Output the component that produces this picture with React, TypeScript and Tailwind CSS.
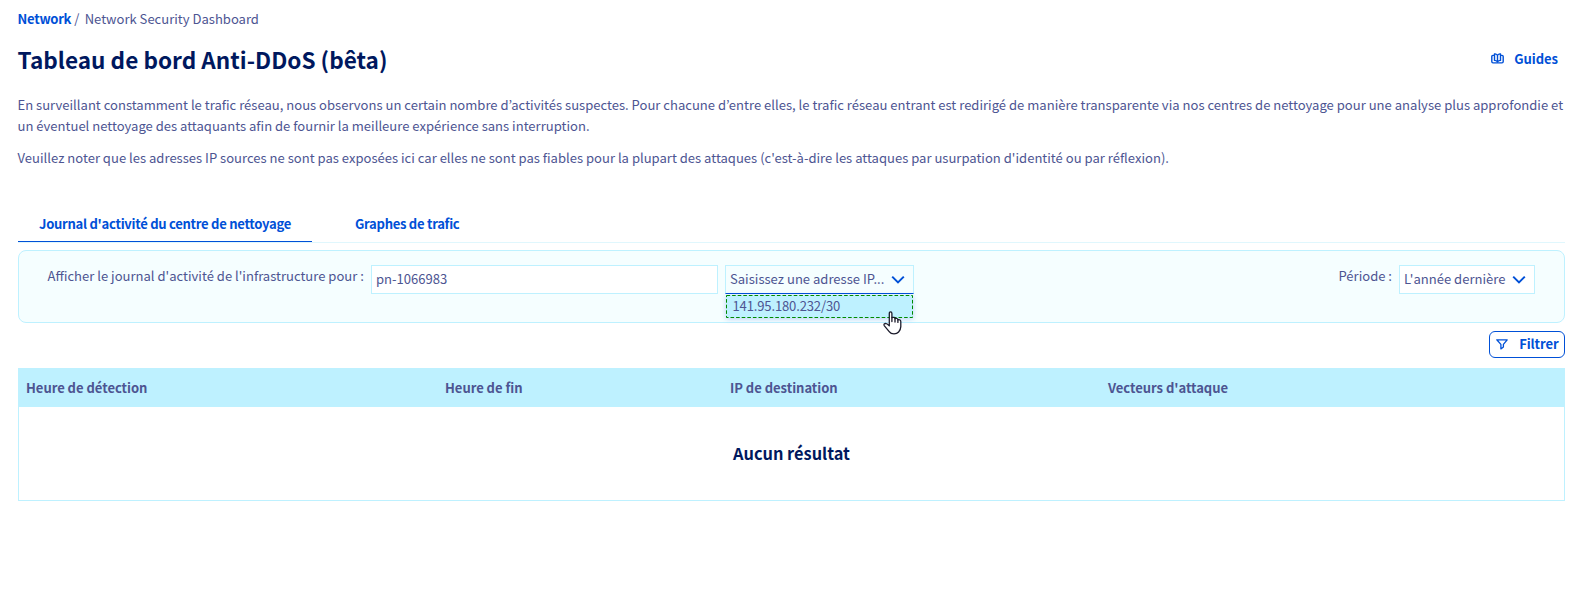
const columns = [
  { label: "Heure de détection", width: "w-[419px]" },
  { label: "Heure de fin", width: "w-[285px]" },
  { label: "IP de destination", width: "w-[378px]" },
  { label: "Vecteurs d'attaque", width: "flex-1" },
];

function Chevron() {
  return (
    <svg width="14" height="10" viewBox="0 0 14 10" fill="none" stroke="#0050d7" strokeWidth="2">
      <path d="M1.2 1.6 L7 7.4 L12.8 1.6" />
    </svg>
  );
}

function BookIcon() {
  return (
    <svg width="13" height="11" viewBox="0 0 13 11" fill="none" stroke="#0050d7" strokeWidth="1.4" strokeLinejoin="round">
      <path d="M3.4 2.4 H2 Q0.8 2.4 0.8 3.6 V8.6 Q0.8 9.9 2 9.9 H11 Q12.2 9.9 12.2 8.6 V3.6 Q12.2 2.4 11 2.4 H9.6" />
      <path d="M6.5 2.2 V8.6 M6.5 2.2 Q5 0.5 3.5 1 V7.4 Q5.4 7.4 6.5 8.9 Q7.6 7.4 9.5 7.4 V1 Q8 0.5 6.5 2.2" />
    </svg>
  );
}

function FilterIcon() {
  return (
    <svg width="12" height="11" viewBox="0 0 12 11" fill="none" stroke="#0050d7" strokeWidth="1.3" strokeLinejoin="round">
      <path d="M0.8 0.8 H11.2 L7.4 5.4 V8 L4.9 9.9 V5.4 Z" />
    </svg>
  );
}

function FocusRing() {
  return (
    <svg className="absolute left-0 top-0" width="187" height="23" fill="none" stroke="#008a00" strokeDasharray="3.6 2">
      <rect x="0.5" y="0.5" width="186" height="22" />
    </svg>
  );
}

function HandCursor() {
  return (
    <svg
      className="absolute left-[157px] top-4"
      width="20"
      height="24"
      viewBox="0 0 20 24"
      fill="#ffffff"
      stroke="#1b1b2b"
      strokeWidth="1.3"
      strokeLinejoin="round"
      strokeLinecap="round"
    >
      <path d="M6.3 14.8 V2.4 Q6.3 0.8 7.6 0.8 Q8.9 0.8 8.9 2.4 V6.6 Q11.8 5.8 12 7.6 Q14.6 6.8 14.9 8.8 Q17.8 8.2 17.8 10.8 V15.6 Q17.6 19 15.6 21 Q14 22.9 11 22.9 Q7.8 22.9 6.2 20.6 L1.2 14.6 Q0.4 12.8 2.4 12.4 Q4 12.4 6.3 14.8 Z" />
      <path d="M8.9 6.6 V10.6 M12 7.8 V11 M14.9 8.8 V11.4" fill="none" />
    </svg>
  );
}

export default function App() {
  return (
    <div className="h-[602px] overflow-hidden bg-white pl-[18px] pr-[26px] pt-2 font-['Noto_Sans_CJK_KR','Noto_Sans',sans-serif] text-[13.06px] leading-[21px] text-[#4d5592]">
      <nav className="-ml-[0.5px] flex whitespace-pre">
        <a className="font-bold tracking-[-0.27px] text-[#0050d7]">Network</a>
        <span> / </span>
        <span className="ml-[2.5px]">Network Security Dashboard</span>
      </nav>

      <header className="mt-4 flex h-7 items-center justify-between">
        <h1 className="-ml-[0.5px] text-[22.56px] font-bold leading-7 tracking-[0.02px] text-[#00185e]">
          Tableau de bord Anti-DDoS (bêta)
        </h1>
        <a className="flex items-center gap-2.5 pb-0.5 pr-[7px] font-bold tracking-[-0.05px] text-[#0050d7]">
          <BookIcon />
          Guides
        </a>
      </header>

      <p className="-ml-[0.5px] mt-[21px] tracking-[0.003px]">
        <span className="block whitespace-nowrap">
          En surveillant constamment le trafic réseau, nous observons un certain nombre d’activités suspectes. Pour
          chacune d’entre elles, le trafic réseau entrant est redirigé de manière transparente via nos centres de
          nettoyage pour une analyse plus approfondie et
        </span>
        <span className="block">
          un éventuel nettoyage des attaquants afin de fournir la meilleure expérience sans interruption.
        </span>
      </p>
      <p className="-ml-[0.5px] mt-[11px] tracking-[0.003px]">
        Veuillez noter que les adresses IP sources ne sont pas exposées ici car elles ne sont pas fiables pour la
        plupart des attaques (c'est-à-dire les attaques par usurpation d'identité ou par réflexion).
      </p>

      <div className="mt-11 flex h-[31px] border-b border-[#e0f7fd] font-bold leading-[23px] tracking-[-0.28px] text-[#0050d7]">
        <a className="h-[30px] w-[294px] border-b border-[#0050d7] pl-[21px]">Journal d'activité du centre de nettoyage</a>
        <a className="pl-[43px]">Graphes de trafic</a>
      </div>

      <section className="mt-[7px] flex h-[73px] rounded-lg border border-[#bef1ff] bg-[#f5feff] pl-7 pr-[29px] pt-[14px]">
        <label className="w-[324px] whitespace-nowrap pl-[0.5px]">
          Afficher le journal d'activité de l'infrastructure pour :
        </label>
        <div className="h-[29px] w-[347px] border border-[#bef1ff] bg-white pl-1 leading-[25px]">pn-1066983</div>
        <div className="relative ml-[7px] h-[29px] w-[189px] border border-b-[#0050d7] border-l-[#bef1ff] border-r-[#bef1ff] border-t-[#bef1ff]">
          <div className="flex h-[27px] items-center justify-between pl-1 pr-2">
            <span className="pb-0.5">Saisissez une adresse IP...</span>
            <Chevron />
          </div>
          <div className="absolute left-0 top-[29px] h-[23px] w-[187px] bg-[#bef1ff] pl-[6.5px] leading-[21px] tracking-[-0.15px] shadow-[0_1px_5px_rgba(0,80,215,0.25)]">
            <FocusRing />
            141.95.180.232/30
            <HandCursor />
          </div>
        </div>
        <div className="ml-auto flex gap-[7px]">
          <label>Période :</label>
          <div className="flex h-[29px] w-[136px] items-center justify-between border border-[#bef1ff] bg-white pl-1 pr-2">
            <span className="pb-0.5">L'année dernière</span>
            <Chevron />
          </div>
        </div>
      </section>

      <div className="mt-2 flex justify-end">
        <button className="flex h-[27px] w-[76px] items-center justify-between rounded-md border border-[#0050d7] pl-1.5 pr-[5.5px] font-bold tracking-[-0.1px] text-[#0050d7]">
          <FilterIcon />
          <span className="pb-0.5">Filtrer</span>
        </button>
      </div>

      <section className="mt-[10px] h-[133px] border border-[#bef1ff]">
        <div className="flex h-[38px] items-center bg-[#bef1ff] pb-0.5 pl-[7px] font-bold tracking-[-0.04px]">
          {columns.map((c) => (
            <div key={c.label} className={c.width}>
              {c.label}
            </div>
          ))}
        </div>
        <div className="flex h-[93px] items-center justify-center text-[16.35px] font-bold text-[#00185e]">
          Aucun résultat
        </div>
      </section>
    </div>
  );
}
